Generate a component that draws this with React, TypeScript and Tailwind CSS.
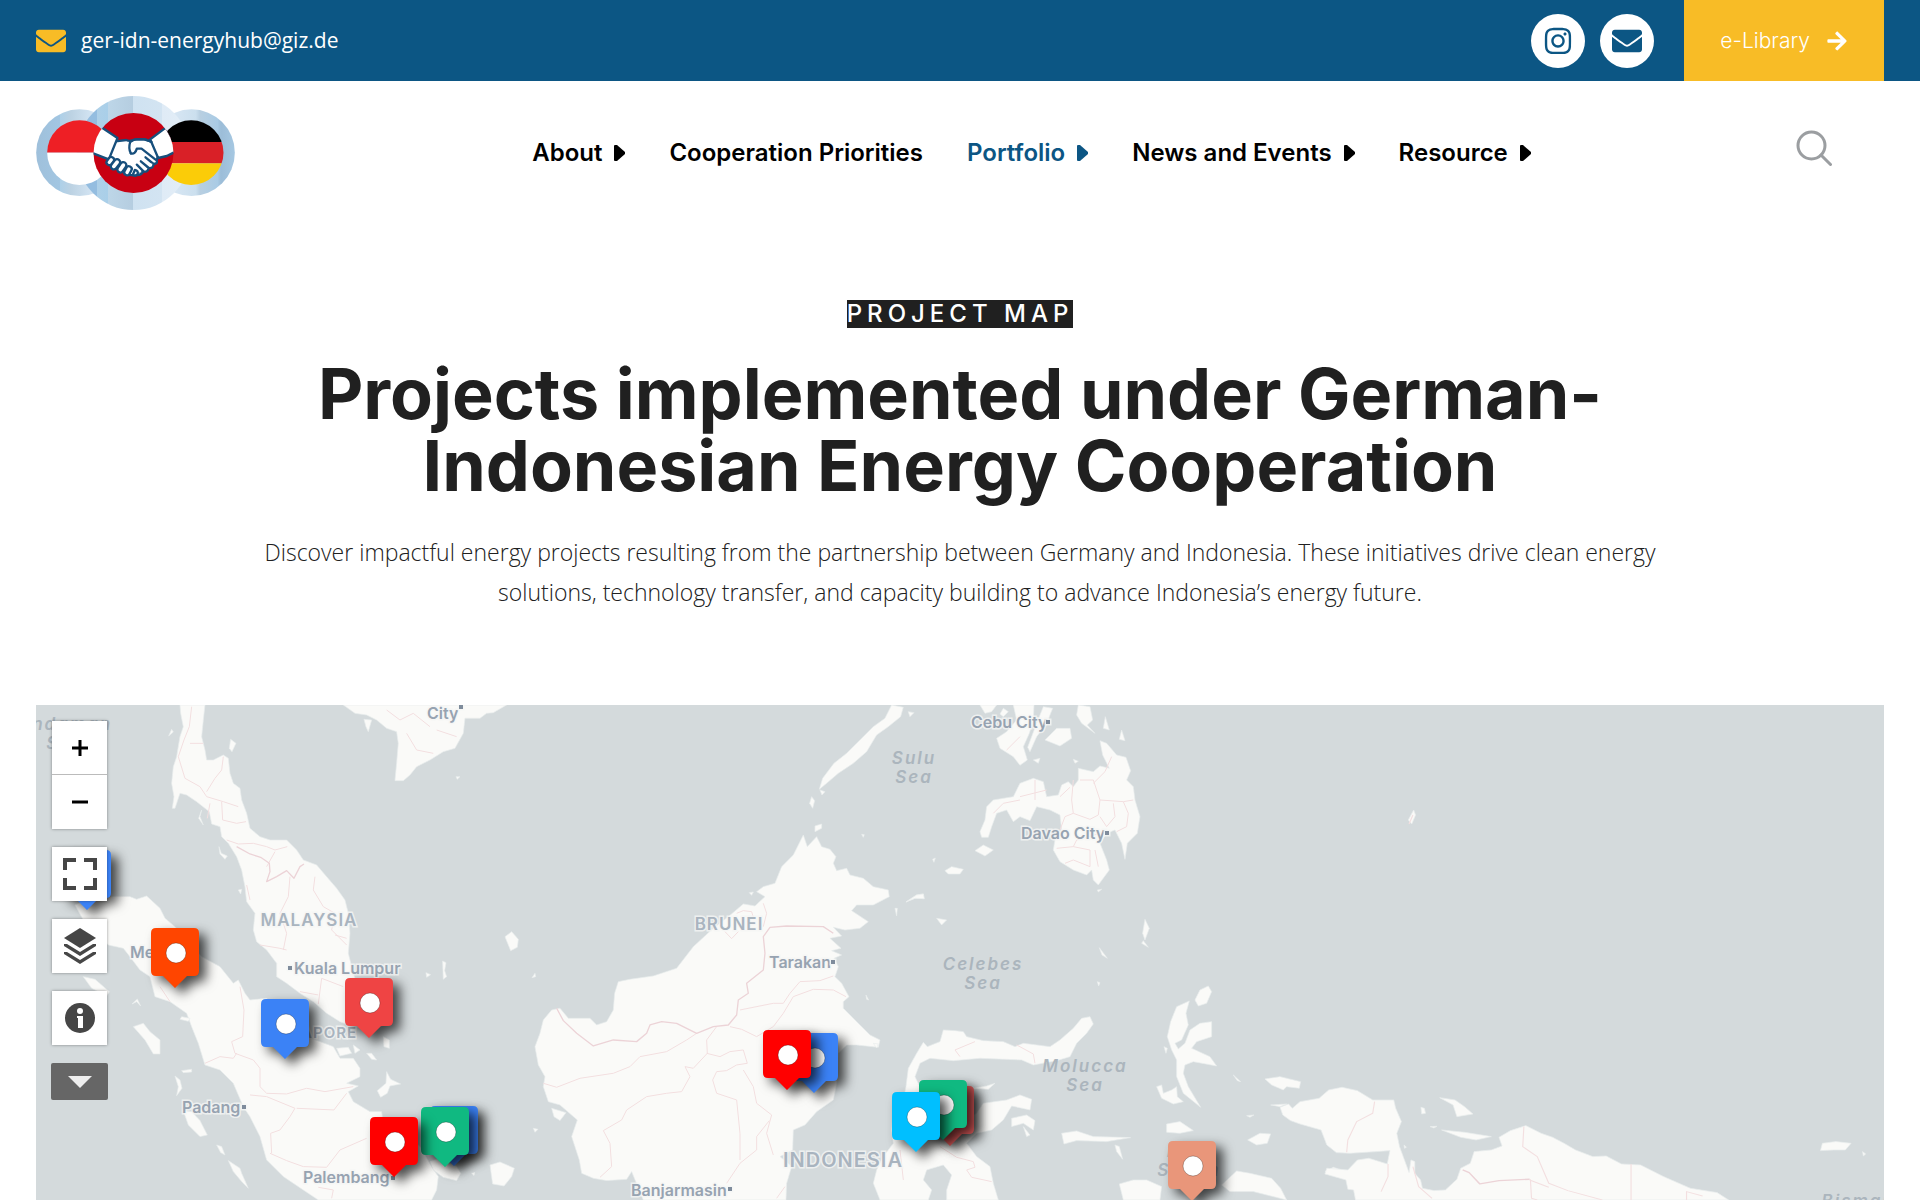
import { FaArrowRight, FaEnvelope, FaInstagram } from "react-icons/fa";

const NAV_LINKS = [
  { label: "About", hasMenu: true },
  { label: "Cooperation Priorities", hasMenu: false },
  { label: "Portfolio", hasMenu: true, active: true },
  { label: "News and Events", hasMenu: true },
  { label: "Resource", hasMenu: true },
];

// Projects, back to front
const PINS = [
  { name: "Banda Aceh", color: "#3b82f6", left: 27, top: 145 },
  { name: "Medan", color: "#ff4500", left: 115, top: 223 },
  { name: "Johor", color: "#ef4444", left: 309, top: 273 },
  { name: "Riau", color: "#3b82f6", left: 225, top: 294 },
  { name: "Bangka", color: "#3b82f6", left: 394, top: 401 },
  { name: "Bangka Belitung", color: "#10b981", left: 385, top: 402 },
  { name: "Palembang", color: "#ff0000", left: 334, top: 412 },
  { name: "Samarinda", color: "#3b82f6", left: 754, top: 328 },
  { name: "East Kalimantan", color: "#ff0000", left: 727, top: 325 },
  { name: "Poso", color: "#e05c5c", left: 890, top: 381 },
  { name: "Central Sulawesi", color: "#10b981", left: 883, top: 375 },
  { name: "Palu", color: "#00bfff", left: 856, top: 387 },
  { name: "Maluku", color: "#e9967a", left: 1132, top: 436 },
];

const CITIES = [
  { text: "City", x: 391, y: 14, dotX: 423, dotY: 0 },
  { text: "Medan", x: 94, y: 253, dotX: 150, dotY: 246 },
  { text: "Kuala Lumpur", x: 258, y: 269, dotX: 252, dotY: 261 },
  { text: "Padang", x: 146, y: 408, dotX: 206, dotY: 400 },
  { text: "Palembang", x: 267, y: 478, dotX: 355, dotY: 471 },
  { text: "Tarakan", x: 733, y: 263, dotX: 795, dotY: 255 },
  { text: "Banjarmasin", x: 595, y: 491, dotX: 692, dotY: 482 },
  { text: "Cebu City", x: 935, y: 23, dotX: 1010, dotY: 15 },
  { text: "Davao City", x: 985, y: 134, dotX: 1069, dotY: 126 },
];

const COUNTRIES = [
  { text: "MALAYSIA", x: 273, y: 221, size: "text-[17px]" },
  { text: "SINGAPORE", x: 273, y: 333, size: "text-[15px]" },
  { text: "BRUNEI", x: 693, y: 225, size: "text-[17px]" },
  { text: "INDONESIA", x: 807, y: 462, size: "text-xl" },
];

const SEAS = [
  { lines: ["Andaman", "Sea"], x: 29, y: 25 },
  { lines: ["Sulu", "Sea"], x: 878, y: 59 },
  { lines: ["Celebes", "Sea"], x: 947, y: 265 },
  { lines: ["Molucca", "Sea"], x: 1049, y: 367 },
  { lines: ["Laut", "Seram"], x: 1153, y: 452 },
  { lines: ["Bismarck", "Sea"], x: 1832, y: 502 },
];

// Each tile is drawn on its own grid and scaled into place
const TILES = [
  {
    id: "sumatra",
    transform: "translate(-16 -5) scale(0.3333)",
    land: [
      "M480 15L555 15 550 60 545 110 555 150 560 180 580 180 610 165 625 175 630 220 640 250 660 265 665 300 680 340 690 385 720 410 750 420 800 420 830 450 850 480 890 495 920 530 950 565 975 600 985 640 990 700 985 760 1000 820 1010 850 1050 900 1080 940 1085 980 1040 985 1000 980 960 965 920 940 880 905 840 880 800 850 770 830 770 790 740 750 710 725 700 690 705 640 680 605 675 560 665 510 650 470 625 430 605 410 600 380 575 372 568 335 530 305 500 285 480 280 465 325 457 325 462 290 455 250 460 200 470 170 480 110 490 80 482 40Z",
      "M165 615L200 600 280 590 330 590 350 598 380 588 420 625 435 655 465 680 500 720 545 770 600 800 640 850 655 840 675 880 690 900 740 895 800 960 860 1010 940 1040 960 1075 1000 1075 1020 1105 1020 1130 980 1150 1015 1158 985 1175 1000 1205 1050 1235 1085 1235 1090 1270 1150 1290 1200 1340 1235 1400 1255 1430 1250 1470 1235 1500 895 1500 850 1470 790 1430 740 1380 720 1310 690 1250 670 1220 640 1150 600 1110 555 1095 535 1030 515 980 500 940 450 905 405 890 390 830 360 810 330 770 310 745 265 735 230 700 190 660Z",
      "M970 15L1460 15 1420 38 1400 40 1380 55 1335 55 1330 100 1305 145 1270 155 1230 180 1190 200 1170 225 1150 242 1125 242 1130 190 1135 130 1130 95 1100 85 1070 60 1040 45 1005 40Z",
      "M190 830L225 838 268 875 260 888 215 865Z",
      "M340 980L370 970 390 995 420 1020 420 1062 400 1062 375 1020Z",
      "M490 1232L515 1235 540 1262 562 1305 540 1310 505 1275Z",
      "M465 1128L480 1140 486 1165 470 1187 475 1160Z",
      "M485 1112L515 1108 515 1116 490 1118Z",
      "M590 1335L605 1340 615 1365 602 1358Z",
      "M625 1382L660 1405 665 1420 685 1465 665 1445 640 1415Z",
      "M1230 1385L1260 1375 1310 1400 1322 1420 1310 1442 1270 1432 1240 1410Z",
      "M1100 1115L1112 1138 1142 1152 1110 1158 1102 1180 1082 1192 1072 1172 1098 1150Z",
      "M950 1045L985 1042 995 1060 960 1068Z",
      "M1090 1010L1108 1020 1108 1045 1092 1040Z",
      "M1040 1060L1055 1060 1070 1080 1055 1078Z",
      "M1000 1035L1020 1050 1005 1060Z",
      "M1268 783L1278 788 1274 812 1280 830 1270 838Z",
      "M1218 818L1232 824 1220 832Z",
      "M1032 58L1055 60 1045 95 1038 80Z",
      "M1308 230L1320 230 1312 238Z",
      "M632 118L648 130 636 155 628 145Z",
      "M455 88L460 96 446 108Z",
      "M597 440L604 460 622 468 615 478 600 462Z",
      "M655 570L665 568 662 582Z",
      "M336 912L352 897 362 918 350 905Z",
      "M545 330L540 350 550 375 536 355Z",
      "M485 950L510 955 505 964 480 958Z",
      "M1355 1420L1365 1418 1362 1427Z",
    ],
    borders: [
      "M515 20L508 80 492 120 475 170 495 235 540 260 560 290 610 305 655 320",
      "M550 130L510 130M560 275L585 235 605 210 610 170M570 310L562 355M605 305L608 360 650 370 678 365",
      "M620 420L655 432 700 430 740 440 765 450 802 440M740 500L765 455",
      "M810 530L805 590 780 640 800 700 790 750M885 530L880 570 910 620 945 640 935 690 980 735M945 705L980 715",
      "M680 555L690 600M720 735L780 745 800 750M970 860L905 835 895 912M840 875L895 885",
      "M660 860L672 930 668 1010 635 1025 645 1060 700 1080 720 1105 720 1160 740 1180 800 1182 860 1165 915 1175 1000 1160",
      "M555 1090L600 1070 640 1075 650 1060M690 1185L740 1190 825 1225 810 1250 780 1290 752 1300 755 1360",
      "M980 1180L942 1230 830 1225M750 1360L800 1382 850 1400 920 1402 960 1350 1040 1315M895 1462L940 1470 935 1495",
      "M420 860L450 905M1160 100L1190 150 1240 160M1100 30L1140 60 1180 40 1230 80M1250 90L1310 110",
    ],
    frontiers: ["M650 440L690 462 722 472 748 490 750 515 740 545 770 530 800 512 822 535 840 500 852 492"],
  },
  {
    id: "kalimantan",
    transform: "translate(444 -5) scale(0.3333)",
    land: [
      "M970 405L982 440 1010 410 1025 440 1050 448 1068 470 1060 490 1070 512 1100 505 1110 525 1150 535 1180 560 1225 570 1228 590 1180 615 1130 615 1115 632 1165 665 1140 685 1095 690 1060 682 1085 708 1050 715 1083 745 1055 752 1085 765 1062 775 1075 800 1065 830 1085 850 1107 890 1090 905 1090 925 1130 965 1170 1005 1200 1020 1195 1042 1130 1035 1100 1035 1075 1060 1070 1150 1060 1200 1010 1235 975 1275 940 1290 938 1350 900 1370 935 1400 920 1450 918 1500 490 1500 455 1415 440 1438 380 1442 340 1435 305 1420 298 1380 275 1310 292 1260 240 1215 205 1205 190 1160 195 1130 175 1095 165 1040 180 1000 190 960 215 930 240 925 265 955 330 955 350 975 380 965 400 930 404 880 415 845 450 838 520 828 590 805 640 740 700 685 745 650 790 612 825 618 855 590 830 575 850 560 885 550 905 500 940 465Z",
      "M1235 15L1270 22 1262 50 1225 80 1190 105 1160 155 1120 190 1075 220 1040 250 1018 268 1028 235 1062 190 1100 160 1150 110 1180 80 1215 55Z",
      "M1285 35L1302 38 1290 50Z",
      "M1020 270L1035 275 1026 285Z",
      "M995 290L1004 302 998 325 989 310Z",
      "M1005 378L1025 372 1025 385 1005 395Z",
      "M75 710L95 695 115 718 112 742 92 752 85 735Z",
      "M165 820L167 830 156 833Z",
      "M215 1225L258 1238 240 1262 222 1250Z",
      "M30 1395L60 1386 103 1405 95 1430 72 1458 38 1452Z",
      "M160 1285L174 1288 165 1297Z",
      "M1395 512L1415 500 1450 508 1440 522 1405 522Z",
      "M1278 606L1310 585 1330 582 1332 596 1305 595Z",
      "M1245 625L1252 625 1250 648Z",
      "M1358 478L1366 474 1362 487Z",
      "M1370 655L1400 660 1385 675Z",
      "M1145 403L1153 404 1150 412Z",
      "M808 578L820 576 815 586Z",
      "M1180 1030L1195 1032 1190 1044Z",
      "M1158 885L1166 900 1160 898Z",
    ],
    borders: [
      "M770 640L790 632 815 635 820 652M735 695L755 716 775 695M850 610L860 640 850 680",
      "M190 1150L230 1162 300 1135 400 1120 450 1100 480 1070 560 1055 620 1020 650 1000",
      "M750 980L785 988 830 1010 880 980 910 940 940 890 1000 868 1060 870 1098 890",
      "M780 930L880 910 910 910 930 880 960 845 1020 842 1060 828",
      "M710 980L680 1020 682 1060 640 1105 615 1100 630 1130 605 1175 560 1180 500 1190 440 1230 425 1260 370 1292 390 1330 395 1400 360 1432",
      "M680 1060L720 1070 750 1055 790 1050 802 1090 770 1095 740 1112 710 1115 698 1140 710 1180 770 1200 780 1300 780 1380",
      "M790 1110L820 1160 830 1210 875 1245 860 1300 880 1365M868 1262L830 1310 830 1350 780 1390 740 1450M890 1495L915 1460",
    ],
    frontiers: [
      "M230 925L250 962 290 1000 340 1038 400 1020 470 1025 500 1000 510 975 545 965 590 970 650 1000 700 980 745 975 770 945 775 900 805 880 800 850 850 810 855 760 850 710 870 682 920 678 1030 680 1060 700",
    ],
  },
  {
    id: "sulawesi",
    transform: "translate(824 -5) scale(0.3333)",
    land: [
      "M100 1330L95 1290 100 1240 130 1200 138 1160 145 1105 170 1060 190 1027 202 1040 240 1025 250 990 285 992 310 995 320 1010 370 1022 430 1025 465 1040 490 1030 570 1040 600 1020 640 985 665 955 690 950 700 972 680 1000 650 1030 630 1070 590 1082 520 1095 485 1080 360 1075 280 1082 210 1075 180 1090 165 1130 180 1160 200 1200 260 1240 300 1270 350 1240 370 1210 440 1200 480 1185 515 1198 510 1230 455 1218 430 1260 395 1290 350 1300 320 1330 350 1370 390 1400 400 1450 415 1500 260 1500 260 1470 275 1425 250 1395 200 1410 190 1440 215 1470 205 1500 60 1500 40 1450 50 1410 70 1370Z",
      "M720 122L740 130 770 165 798 172 812 212 800 240 820 260 825 300 840 350 832 400 802 430 795 478 785 430 765 390 740 400 720 430 740 480 748 510 715 555 700 540 695 510 680 525 640 510 600 485 580 450 585 420 605 390 600 345 570 330 530 320 510 362 480 350 460 365 440 330 410 340 395 380 385 412 365 412 360 395 375 360 380 320 400 300 460 290 480 250 520 235 550 245 560 290 595 285 605 255 625 245 640 260 655 240 655 205 700 215 720 198 748 205 728 165Z",
      "M410 115L440 95 470 60 460 15 522 15 520 60 508 100 490 140 502 180 480 196 460 170 420 145Z",
      "M550 20L578 25 560 70 530 110 510 155 503 142 530 70Z",
      "M555 120L590 85 630 85 635 115 600 138Z",
      "M655 15L690 20 698 60 682 75 705 100 665 70 650 45Z",
      "M736 50L748 90 730 85Z",
      "M785 90L795 122 778 118Z",
      "M360 15L410 15 395 35 375 40Z",
      "M430 25L445 35 430 50 420 42Z",
      "M520 180L540 175 535 190Z",
      "M640 178L655 184 645 190Z",
      "M345 452L370 435 400 450 375 468Z",
      "M138 606L170 585 190 582 193 596 165 595Z",
      "M855 658L868 685 855 720 848 700Z",
      "M850 722L865 742 845 730Z",
      "M718 743L742 775 726 765Z",
      "M712 845L720 848 716 858Z",
      "M712 570L725 568 715 576Z",
      "M605 1300L650 1293 700 1310 812 1313 740 1325 650 1322 612 1332Z",
      "M765 1335L778 1340 788 1378 770 1355Z",
      "M455 1255L500 1245 525 1262 520 1290 490 1270 455 1280Z",
      "M490 1280L510 1305 500 1310Z",
      "M340 1165L380 1158 405 1150 385 1168Z",
      "M988 903L978 940 985 975 965 1020 945 1030 955 1047 975 1030 990 990 1020 970 1055 965 1055 1010 1010 1025 995 1045 1050 1070 1070 1098 1000 1085 975 1095 970 1120 985 1160 1022 1222 970 1180 950 1130 950 1080 935 1050 922 1010 932 965 950 920Z",
      "M1005 900L1020 870 1045 858 1055 875 1040 910 1015 918Z",
      "M890 1160L905 1155 910 1180 935 1170 950 1160 952 1190 970 1205 940 1212 905 1195Z",
      "M920 1272L960 1265 1000 1292 960 1300 920 1297Z",
      "M912 1040L922 1045 918 1060Z",
      "M1085 1455L1130 1413 1170 1420 1235 1435 1262 1465 1280 1500 1240 1490 1180 1475 1110 1475Z",
      "M778 1452L820 1440 860 1440 905 1460 900 1500 790 1500Z",
      "M1163 1320L1200 1300 1232 1302 1222 1330 1190 1335Z",
      "M1215 1137L1260 1130 1322 1145 1318 1165 1280 1160 1270 1170 1235 1155Z",
      "M1232 1215L1280 1212 1260 1220Z",
      "M1120 1125L1142 1145 1132 1142Z",
      "M1395 1415L1420 1402 1445 1410 1445 1430Z",
      "M1160 1247L1182 1245 1170 1252Z",
    ],
    borders: [
      "M345 1025L285 1050 300 1070M470 1035L520 1062 525 1090M240 1340L290 1372 340 1385 345 1402 320 1410 335 1432 395 1445M130 1440L120 1350",
      "M525 240L525 300M480 290L560 270M400 340L430 310 480 300M640 240L635 300 640 340 690 358 715 345 720 300 700 240 660 240M700 250L735 215 755 170",
      "M720 300L790 305 820 300M790 305L805 340 800 380 770 395M720 350L740 380 765 350 760 310M600 290L630 262M600 390L615 350 640 340",
      "M590 445L640 440 690 450 690 500 640 480 615 490M640 440L650 420 720 400M705 450L715 500M440 150L480 110",
    ],
    frontiers: [],
  },
  {
    id: "papua",
    transform: "translate(1264 -5) scale(0.3827 0.3333)",
    land: [
      "M-52 1222L-30 1212 -20 1225 0 1205 50 1195 75 1170 110 1162 150 1172 190 1200 245 1200 250 1225 265 1265 253 1300 260 1340 285 1418 290 1380 300 1385 300 1420 315 1440 320 1465 350 1472 380 1470 410 1438 420 1405 445 1390 455 1355 500 1350 528 1338 520 1312 550 1292 590 1277 630 1300 660 1312 690 1330 720 1350 765 1370 800 1368 840 1392 890 1395 950 1430 1020 1465 1090 1478 1120 1500 145 1500 140 1470 125 1468 120 1440 65 1422 70 1405 125 1410 150 1380 180 1375 228 1392 235 1352 200 1355 130 1360 95 1358 70 1335 55 1290 0 1272 -25 1262 -45 1245Z",
      "M365 1193L405 1200 430 1220 452 1242 410 1250 400 1215Z",
      "M370 1290L430 1297 500 1310 460 1320 420 1312Z",
      "M316 1222L325 1225 328 1240 318 1242Z",
      "M340 1280L358 1279 350 1284Z",
      "M1360 1352L1365 1330 1400 1325 1440 1330 1425 1350 1395 1350Z",
      "M1470 1355L1478 1362 1472 1368Z",
      "M297 330L302 345 292 372 283 360Z",
      "M272 1335L278 1342 273 1345Z",
    ],
    borders: [
      "M585 1280L582 1340 620 1370 650 1450 700 1472 790 1500M602 1438L605 1495 620 1500M600 1440L650 1462",
      "M195 1205L190 1240 148 1265 125 1320 122 1357M1010 1500L1010 1475 1052 1488M295 1400L310 1460 345 1495M230 1392L230 1430 212 1475",
      "M865 1392L865 1500M285 372L295 345",
    ],
    frontiers: ["M425 1410L442 1418 470 1452 520 1442 600 1438"],
  },
];

const Logo = () => (
  <svg viewBox="48 48 596 342" className="h-[114px] w-[199px]" role="img" aria-label="Energy Hub">
    <defs>
      <linearGradient id="ring" x1="0" x2="1" y1="0" y2="0">
        <stop offset="0" stopColor="#94bde0" />
        <stop offset="0.18" stopColor="#94bde0" />
        <stop offset="0.18" stopColor="#aed0e8" />
        <stop offset="0.28" stopColor="#a9cfe9" />
        <stop offset="0.28" stopColor="#bdd6e8" />
        <stop offset="0.5" stopColor="#b5cde0" />
        <stop offset="0.5" stopColor="#cfe2f1" />
        <stop offset="0.75" stopColor="#d3e4f2" />
        <stop offset="0.75" stopColor="#dfebf6" />
        <stop offset="1" stopColor="#e3eef7" />
      </linearGradient>
      <linearGradient id="ringLeft" x1="0" x2="1" y1="0" y2="0">
        <stop offset="0" stopColor="#9fc0db" />
        <stop offset="0.28" stopColor="#a2c6e2" />
        <stop offset="0.28" stopColor="#aed0e8" />
        <stop offset="0.4" stopColor="#bcd2e3" />
        <stop offset="0.6" stopColor="#cfe1f0" />
        <stop offset="0.75" stopColor="#dce9f5" />
      </linearGradient>
      <linearGradient id="ringRight" x1="0" x2="1" y1="0" y2="0">
        <stop offset="0.2" stopColor="#dce9f5" />
        <stop offset="0.55" stopColor="#cbdfee" />
        <stop offset="0.6" stopColor="#b8cfe1" />
        <stop offset="0.8" stopColor="#a9cbe5" />
        <stop offset="0.84" stopColor="#9cbdd8" />
        <stop offset="1" stopColor="#a6c8e2" />
      </linearGradient>
      <clipPath id="flagId">
        <circle cx="178" cy="218" r="97" />
      </clipPath>
      <clipPath id="flagDe">
        <circle cx="513" cy="218" r="97" />
      </clipPath>
      <clipPath id="core">
        <circle cx="340" cy="219" r="120" />
      </clipPath>
    </defs>
    <circle cx="178" cy="218" r="130" fill="url(#ringLeft)" />
    <circle cx="514" cy="218" r="130" fill="url(#ringRight)" />
    <circle cx="340" cy="219" r="171" fill="url(#ring)" />
    <g clipPath="url(#flagId)">
      <rect x="80" y="120" width="200" height="98" fill="#ee1f25" />
      <rect x="80" y="218" width="200" height="98" fill="#fff" />
    </g>
    <g clipPath="url(#flagDe)">
      <rect x="410" y="120" width="210" height="66" fill="#000" />
      <rect x="410" y="186" width="210" height="64" fill="#d92027" />
      <rect x="410" y="250" width="210" height="68" fill="#fbcc08" />
    </g>
    <circle cx="340" cy="219" r="120" fill="#c80012" />
    <g clipPath="url(#core)" fill="#fff" stroke="#174f7c" strokeWidth="7" strokeLinejoin="round" strokeLinecap="round">
      <path d="M286 184L318 180Q330 186 345 178L372 178 396 186 414 226 408 246 386 260 362 280 345 287 322 284 280 250 262 240 266 222Z" />
      <path d="M205 215L238 138 292 174 266 238 250 232Z" />
      <path d="M475 210L438 142 390 178 414 234 440 228Z" />
      <path d="M332 220Q324 206 330 186Q340 178 350 178L376 178 394 186" fill="none" />
      <path d="M332 220Q345 224 350 206L364 206 410 242Q412 252 400 252L376 232" />
      <path d="M400 252Q400 266 386 264L362 244M386 264Q382 278 370 274L350 254M370 274Q362 288 344 284" />
      <rect x="262" y="230" width="17" height="26" rx="8" transform="rotate(38 270 243)" />
      <rect x="277" y="236" width="18" height="34" rx="9" transform="rotate(38 286 253)" />
      <rect x="296" y="245" width="18" height="34" rx="9" transform="rotate(34 305 262)" />
      <rect x="315" y="258" width="17" height="28" rx="8" transform="rotate(28 323 272)" />
      <path d="M344 270Q356 272 352 283Q346 290 338 284Z" />
    </g>
  </svg>
);

const TopBar = () => (
  <div className="flex h-[81px] items-stretch justify-between bg-[#0c5684] px-9 text-white">
    <a
      href="mailto:ger-idn-energyhub@giz.de"
      className="flex items-center gap-[15px] font-['Open_Sans',sans-serif] text-[21px]"
    >
      <FaEnvelope className="size-[30px] text-[#f8bc26]" />
      ger-idn-energyhub@giz.de
    </a>
    <div className="flex items-center gap-[15px]">
      <a
        href="#instagram"
        aria-label="Instagram"
        className="flex size-[54px] items-center justify-center rounded-full bg-white text-[#0c5684]"
      >
        <FaInstagram className="size-[30px]" />
      </a>
      <a
        href="#contact"
        aria-label="Email"
        className="flex size-[54px] items-center justify-center rounded-full bg-white text-[#0c5684]"
      >
        <FaEnvelope className="size-[30px]" />
      </a>
      <a
        href="#library"
        className="ml-[15px] flex h-full items-center gap-4 bg-[#f8bc26] px-9 font-[Inter,sans-serif] text-[21px] font-light"
      >
        e-Library
        <FaArrowRight className="size-[22px]" />
      </a>
    </div>
  </div>
);

const Header = () => (
  <header className="flex items-center px-9 py-[15px]">
    <a href="#home">
      <Logo />
    </a>
    <nav className="flex flex-1 items-center justify-center gap-11 pl-8 font-[Inter,sans-serif] text-2xl font-semibold text-black">
      {NAV_LINKS.map((link) => (
        <a
          key={link.label}
          href="#"
          className={link.active ? "flex items-center gap-3 text-[#0c5684]" : "flex items-center gap-3"}
        >
          {link.label}
          {link.hasMenu && (
            <svg viewBox="0 0 11 16" className="h-4 w-[11px]" fill="currentColor">
              <path d="M0 1Q0 0 1 0H3L11 7Q11.500 8 11 9L3 16H1Q0 16 0 15Z" />
            </svg>
          )}
        </a>
      ))}
    </nav>
    <button type="button" aria-label="Search" className="mr-[52px] mb-2.5 text-[#9b9ea1]">
      <svg viewBox="0 0 36 36" className="size-9" fill="none" stroke="currentColor" strokeWidth="3">
        <circle cx="15.500" cy="15.500" r="13.500" />
        <path d="M25 25L34.500 34.500" strokeLinecap="round" />
      </svg>
    </button>
  </header>
);

const Hero = () => (
  <section className="flex flex-col items-center px-9 pt-[75px] pb-[93px] text-center text-[#202020]">
    <p className="bg-[#202020] font-[Inter,sans-serif] text-2xl leading-7 font-medium tracking-[5px] text-white">
      PROJECT MAP
    </p>
    <h1 className="mt-[30px] max-w-[1400px] font-[Inter,sans-serif] text-[70px] leading-[72px] font-bold">
      Projects implemented under German-Indonesian Energy Cooperation
    </h1>
    <p className="mt-[30px] max-w-[1440px] font-['Open_Sans',sans-serif] text-[23px] leading-10 font-light">
      Discover impactful energy projects resulting from the partnership between Germany and Indonesia. These
      initiatives drive clean energy solutions, technology transfer, and capacity building to advance Indonesia’s
      energy future.
    </p>
  </section>
);

const BaseMap = () => (
  <svg className="absolute inset-0 h-full w-full" aria-hidden="true">
    {TILES.map((tile) => (
      <g key={tile.id} transform={tile.transform} strokeLinejoin="round">
        {tile.land.map((d) => (
          <path key={d} d={d} fill="#fafaf8" stroke="#e9eded" strokeWidth="2" />
        ))}
        {tile.borders.map((d) => (
          <path key={d} d={d} fill="none" stroke="#f3dfe0" strokeWidth="3" />
        ))}
        {tile.frontiers.map((d) => (
          <path key={d} d={d} fill="none" stroke="#ecd3d7" strokeWidth="4" />
        ))}
      </g>
    ))}
    <g
      className="font-[Inter,sans-serif] text-[17px] italic tracking-[2px]"
      fill="#abb5bd"
      fontWeight="600"
      textAnchor="middle"
    >
      {SEAS.map((sea) =>
        sea.lines.map((line, i) => (
          <text key={sea.lines[0] + line} x={sea.x} y={sea.y + i * 19}>
            {line}
          </text>
        )),
      )}
    </g>
    <g
      className="font-[Inter,sans-serif] tracking-[1px] [paint-order:stroke]"
      fill="#a9b4bf"
      stroke="#f5f6f5"
      strokeWidth="3"
      strokeOpacity="0.8"
      fontWeight="600"
      textAnchor="middle"
    >
      {COUNTRIES.map((country) => (
        <text key={country.text} x={country.x} y={country.y} className={country.size}>
          {country.text}
        </text>
      ))}
    </g>
    <g
      className="font-[Inter,sans-serif] text-base [paint-order:stroke]"
      fill="#97a3b1"
      stroke="#f5f6f5"
      strokeWidth="3"
      strokeOpacity="0.8"
      fontWeight="600"
    >
      {CITIES.map((city) => (
        <g key={city.text}>
          <text x={city.x} y={city.y}>
            {city.text}
          </text>
          <rect x={city.dotX} y={city.dotY} width="4" height="4" fill="#7f8c9c" />
        </g>
      ))}
    </g>
  </svg>
);

const MapControls = () => (
  <div className="absolute top-4 left-4 flex w-[55px] flex-col items-center gap-[18px] text-[#464646]">
    <div className="flex w-full flex-col divide-y divide-[#bbb] bg-white text-black shadow-[0_0_3px_rgba(0,0,0,0.4)]">
      <button type="button" aria-label="Zoom in" className="flex h-[54px] items-center justify-center">
        <svg viewBox="0 0 16 16" className="size-4" stroke="currentColor" strokeWidth="3">
          <path d="M8 0V16M0 8H16" />
        </svg>
      </button>
      <button type="button" aria-label="Zoom out" className="flex h-[54px] items-center justify-center">
        <svg viewBox="0 0 16 16" className="size-4" stroke="currentColor" strokeWidth="3">
          <path d="M0 8H16" />
        </svg>
      </button>
    </div>
    <button
      type="button"
      aria-label="Full screen"
      className="flex h-[54px] w-full items-center justify-center bg-white shadow-[0_0_3px_rgba(0,0,0,0.4)]"
    >
      <svg viewBox="0 0 34 32" className="h-8 w-[34px]" fill="none" stroke="currentColor" strokeWidth="4">
        <path d="M2 12V2H13M21 2H32V12M32 20V30H21M13 30H2V20" />
      </svg>
    </button>
    <button
      type="button"
      aria-label="Layers"
      className="flex h-[54px] w-full items-center justify-center bg-white shadow-[0_0_3px_rgba(0,0,0,0.4)]"
    >
      <svg viewBox="0 0 34 36" className="h-9 w-[34px]" fill="currentColor">
        <path d="M17 0L33 10 17 20 1 10Z" />
        <path d="M1 16L4 16 17 24 30 16 33 16 33 18 17 28 1 18Z" />
        <path d="M1 24L4 24 17 32 30 24 33 24 33 26 17 36 1 26Z" />
      </svg>
    </button>
    <button
      type="button"
      aria-label="Information"
      className="flex h-[54px] w-full items-center justify-center bg-white shadow-[0_0_3px_rgba(0,0,0,0.4)]"
    >
      <svg viewBox="0 0 30 30" className="size-[30px]">
        <circle cx="15" cy="15" r="15" fill="currentColor" />
        <circle cx="15" cy="8" r="3" fill="#fff" />
        <path d="M12 13H18V25H13V15H12Z" fill="#fff" />
      </svg>
    </button>
    <button
      type="button"
      aria-label="Collapse controls"
      className="flex h-[37px] w-[57px] items-center justify-center rounded-xs bg-[#666]"
    >
      <svg viewBox="0 0 24 12" className="h-3 w-6" fill="#eee">
        <path d="M0 0H24L12 12Z" />
      </svg>
    </button>
  </div>
);

const ProjectMap = () => (
  <section
    aria-label="Project map"
    className="relative mx-9 min-h-[400px] flex-1 overflow-hidden bg-[#d4dadc]"
  >
    <BaseMap />
    {PINS.map((pin) => (
      <button
        key={pin.name}
        type="button"
        aria-label={pin.name}
        className="absolute drop-shadow-[7px_6px_6px_rgba(0,0,0,0.7)]"
        style={{ left: pin.left, top: pin.top }}
      >
        <svg viewBox="0 0 48 60" className="h-[60px] w-12">
          <path
            d="M5 0H43Q48 0 48 5V43Q48 48 43 48H36L24 60 12 48H5Q0 48 0 43V5Q0 0 5 0Z"
            fill={pin.color}
          />
          <circle cx="25" cy="25" r="10" fill="#fff" stroke="#000" strokeOpacity="0.25" />
        </svg>
      </button>
    ))}
    <MapControls />
  </section>
);

export default function App() {
  return (
    <div className="flex min-h-screen flex-col bg-white">
      <TopBar />
      <Header />
      <main className="flex flex-1 flex-col">
        <Hero />
        <ProjectMap />
      </main>
    </div>
  );
}
